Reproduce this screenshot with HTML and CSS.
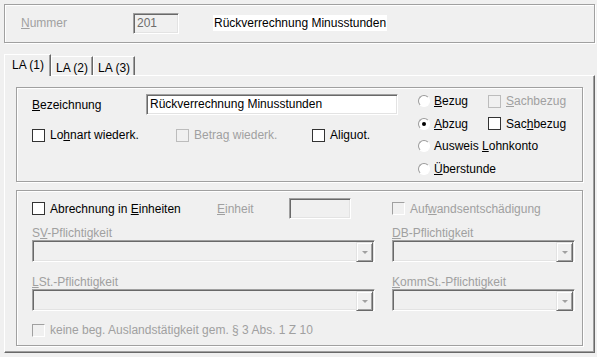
FILE: index.html
```html
<!DOCTYPE html>
<html lang="de">
<head>
  <meta charset="UTF-8">
  <title>Lohnart</title>
  <link rel="stylesheet" href="styles.css">
</head>
<body>
  <div class="head-box">
    <span class="head-label disabled"><u>N</u>ummer</span>
    <span class="field field-num">201</span>
    <span class="head-title">Rückverrechnung Minusstunden</span>
  </div>

  <div class="tabs">
    <div class="tab active">LA (1)</div>
    <div class="tab">LA (2)</div>
    <div class="tab">LA (3)</div>
  </div>

  <div class="page">
    <div class="group group-top">
      <div class="top-left">
        <div class="name-row">
          <span class="name-label"><u>B</u>ezeichnung</span>
          <div class="field field-text">Rückverrechnung Minusstunden</div>
        </div>
        <div class="check-row">
          <span class="chk chk-first"><span class="box"></span><span>Lo<u>h</u>nart wiederk.</span></span>
          <span class="chk chk-second disabled"><span class="box box-off"></span><span>Betra<u>g</u> wiederk.</span></span>
          <span class="chk"><span class="box"></span><span>Ali<u>g</u>uot.</span></span>
        </div>
      </div>
      <div class="top-right">
        <span class="opt"><span class="radio"></span><span><u>B</u>ezug</span></span>
        <span class="chk disabled"><span class="box box-off"></span><span><u>S</u>achbezug</span></span>
        <span class="opt"><span class="radio checked"></span><span><u>A</u>bzug</span></span>
        <span class="chk"><span class="box"></span><span>Sac<u>h</u>bezug</span></span>
        <span class="opt wide"><span class="radio"></span><span>Ausweis <u>L</u>ohnkonto</span></span>
        <span class="opt wide"><span class="radio"></span><span><u>Ü</u>berstunde</span></span>
      </div>
    </div>

    <div class="group group-bottom">
      <div class="units-row">
        <span class="chk chk-units"><span class="box"></span><span>Abrechnung in <u>E</u>inheiten</span></span>
        <span class="units-label disabled"><u>E</u>inheit</span>
        <span class="field field-unit"></span>
      </div>
      <span class="chk disabled"><span class="box box-3d"></span><span>Auf<u>w</u>andsentschädigung</span></span>

      <span class="combo-label disabled">S<u>V</u>-Pflichtigkeit</span>
      <span class="combo-label disabled"><u>D</u>B-Pflichtigkeit</span>
      <div class="combo"><span class="combo-btn"><span class="arrow"></span></span></div>
      <div class="combo"><span class="combo-btn"><span class="arrow"></span></span></div>

      <span class="combo-label disabled"><u>L</u>St.-Pflichtigkeit</span>
      <span class="combo-label disabled"><u>K</u>ommSt.-Pflichtigkeit</span>
      <div class="combo"><span class="combo-btn"><span class="arrow"></span></span></div>
      <div class="combo"><span class="combo-btn"><span class="arrow"></span></span></div>

      <span class="chk disabled foreign"><span class="box box-3d"></span><span>keine beg. Auslandstätigkeit gem. § 3 Abs. 1 Z 10</span></span>
    </div>
  </div>
</body>
</html>
```

FILE: styles.css
```css
* {
  box-sizing: border-box;
}

body {
  margin: 0;
  width: 597px;
  height: 357px;
  overflow: hidden;
  background-color: #f0f0f0;
  font-family: "Liberation Sans", Arial, sans-serif;
  font-size: 12px;
  color: #000;
}

u {
  text-decoration: underline;
  text-underline-offset: 1px;
}

.disabled {
  color: #a0a0a0;
}

/* etched frames */
.head-box,
.group {
  border: 1px solid #a0a0a0;
  box-shadow: inset 1px 1px 0 #fff, 1px 1px 0 #fff;
}

.head-box {
  margin: 4px 0 0 4px;
  width: 591px;
  height: 39px;
  display: flex;
  align-items: center;
  padding: 0 0 1px 16px;
}

.head-label {
  width: 112px;
}

.field {
  height: 21px;
  border: 1px solid;
  border-color: #a0a0a0 #fff #fff #a0a0a0;
  box-shadow: inset 1px 1px 0 #696969, inset -1px -1px 0 #e3e3e3;
  line-height: 19px;
  padding-left: 3px;
}

.field-num {
  width: 46px;
  color: #6d6d6d;
}

.head-title {
  margin-left: 34px;
  background-color: #fff;
  line-height: 16px;
  padding: 0 1px;
}

/* tabs */
.tabs {
  margin: 11px 0 0 4px;
  height: 21px;
  display: flex;
  align-items: flex-end;
}

.tab {
  height: 19px;
  padding: 4px 4px 0;
  line-height: 15px;
  border-top: 1px solid #fff;
  border-left: 1px solid #fff;
  border-right: 1px solid #696969;
  box-shadow: inset -1px 0 0 #a0a0a0;
}

.tab.active {
  position: relative;
  z-index: 1;
  height: 22px;
  margin-bottom: -1px;
  padding: 3px 6px 0 7px;
  background-color: #f0f0f0;
}

.page {
  margin-left: 4px;
  width: 591px;
  height: 278px;
  padding: 11px 0 0 11px;
  border-top: 1px solid #fff;
  border-left: 1px solid #fff;
  border-right: 1px solid #696969;
  border-bottom: 1px solid #696969;
  box-shadow: inset -1px -1px 0 #a0a0a0;
}

.group {
  width: 567px;
}

/* first group */
.group-top {
  height: 95px;
  display: flex;
}

.top-left {
  width: 401px;
  padding: 6px 0 0 15px;
}

.name-row {
  display: flex;
  align-items: center;
  height: 21px;
}

.name-label {
  width: 114px;
}

.field-text {
  width: 252px;
  background-color: #fff;
}

.check-row {
  margin-top: 12px;
  display: flex;
  height: 16px;
}

.chk-first {
  width: 144px;
}

.chk-second {
  width: 136px;
}

.top-right {
  padding-top: 2px;
  display: grid;
  grid-template-columns: 70px auto;
  grid-auto-rows: 22.5px;
  align-items: center;
}

.opt.wide {
  grid-column: span 2;
}

/* check boxes and radios */
.chk,
.opt {
  display: inline-flex;
  align-items: center;
  white-space: nowrap;
  line-height: 16px;
}

.box {
  flex: none;
  width: 13px;
  height: 13px;
  margin-right: 5px;
  border: 1px solid #333;
  background-color: #fff;
}

.box-off {
  border-color: #bcbcbc;
  background-color: #f0f0f0;
}

.box-3d {
  border-color: #a0a0a0 #fff #fff #a0a0a0;
  background-color: #f0f0f0;
}

.radio {
  flex: none;
  width: 12px;
  height: 12px;
  margin-right: 4px;
  border-radius: 50%;
  border: 1px solid;
  border-color: #9a9a9a #fff #fff #9a9a9a;
  background-color: #fff;
  display: flex;
  align-items: center;
  justify-content: center;
}

.radio.checked::after {
  content: "";
  width: 4px;
  height: 4px;
  border-radius: 50%;
  background-color: #000;
}

/* second group */
.group-bottom {
  margin-top: 8px;
  height: 156px;
  padding: 7px 0 0 15px;
  display: grid;
  grid-template-columns: 343px 183px;
  grid-template-rows: 21px 21px 22px 27px 22px 27px;
  column-gap: 17px;
}

.units-row {
  display: flex;
  align-items: center;
}

.chk-units {
  width: 185px;
}

.units-label {
  width: 72px;
}

.field-unit {
  width: 62px;
}

.combo-label {
  align-self: end;
  line-height: 14px;
}

.combo {
  height: 22px;
  border: 1px solid;
  border-color: #a0a0a0 #fff #fff #a0a0a0;
  box-shadow: inset 1px 1px 0 #696969, inset -1px -1px 0 #e3e3e3;
  padding: 1px 1px 0 0;
  display: flex;
  justify-content: flex-end;
}

.combo-btn {
  width: 17px;
  height: 20px;
  border: 1px solid;
  border-color: #e3e3e3 #696969 #696969 #e3e3e3;
  box-shadow: inset 1px 1px 0 #fff, inset -1px -1px 0 #a0a0a0;
  display: flex;
  align-items: center;
  justify-content: center;
}

.arrow {
  width: 0;
  height: 0;
  border-left: 3px solid transparent;
  border-right: 3px solid transparent;
  border-top: 3px solid #a0a0a0;
}

.foreign {
  grid-column: span 2;
  align-self: end;
}
```
